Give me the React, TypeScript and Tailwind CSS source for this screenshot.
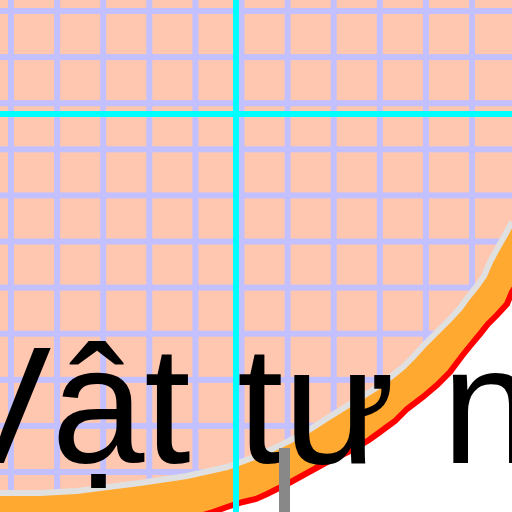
import React from "react";

// points traced along the edges of the zoomed shape
const inner: [number, number][] = [
  [0, 493], [40, 493], [77, 491], [100, 488], [140, 483], [187, 476], [227, 467],
  [260, 455], [289, 441], [309, 430], [326, 419], [350, 404], [376, 388], [393, 375],
  [403, 367], [413, 357], [423, 346], [432, 337], [441, 328], [450, 319], [460, 308],
  [468, 297], [477, 286], [484, 276], [490, 262], [497, 249], [505, 235], [512, 222],
];

const outer: [number, number][] = [
  [200, 516], [213, 512], [227, 507], [243, 502], [256, 499], [267, 494], [289, 483],
  [309, 472], [329, 461], [350, 451], [369, 440], [380, 432], [395, 421], [407, 409],
  [423, 397], [437, 385], [450, 372], [462, 356], [470, 346], [480, 334], [488, 324],
  [497, 315], [507, 304], [512, 292], [520, 280],
];

const pts = (p: [number, number][]) => p.map(([x, y]) => `${x},${y}`).join(" L");

const innerPath = "M" + pts(inner);
const outerPath = "M" + pts(outer);
const salmon = `M0,0 L512,0 L${pts([...inner].reverse())} Z`;
const band = `M${pts(inner)} L520,280 L${pts([...outer].reverse())} L0,520 Z`;

const grid = Array.from({ length: 11 }, (_, k) => 8 + k * 46.1);

function ZoomCanvas() {
  return (
    <svg width={512} height={512} viewBox="0 0 512 512" className="absolute inset-0">
      <defs>
        <clipPath id="inside">
          <path d={salmon} />
        </clipPath>
      </defs>
      <path d={salmon} fill="#ffc6b0" />
      <g clipPath="url(#inside)" fill="#c3c0ff">
        {grid.map((v) => (
          <rect key={"v" + v} x={v} y={0} width={6} height={512} />
        ))}
        {grid.map((v) => (
          <rect key={"h" + v} x={0} y={v} width={512} height={6} />
        ))}
      </g>
      <path d={band} fill="#ffa930" />
      <path d={innerPath} fill="none" stroke="#e0e0e0" strokeWidth={6} />
      <path d={outerPath} fill="none" stroke="#ff0000" strokeWidth={6} />
    </svg>
  );
}

export default function App() {
  return (
    <div className="relative w-[512px] h-[512px] overflow-hidden bg-white">
      <ZoomCanvas />
      <div
        className="absolute left-[-60px] top-[322px] whitespace-nowrap text-[167px] leading-none text-black"
        style={{ fontFamily: '"Liberation Sans", Arial, sans-serif' }}
      >
        Vật tư nông
      </div>
      <div className="absolute left-[233px] top-0 h-full w-[6px] bg-[#00ffff]" />
      <div className="absolute left-0 top-[111px] h-[6px] w-full bg-[#00ffff]" />
      <div className="absolute left-[279px] top-[448px] h-[64px] w-[11px] bg-[#888888]" />
    </div>
  );
}
